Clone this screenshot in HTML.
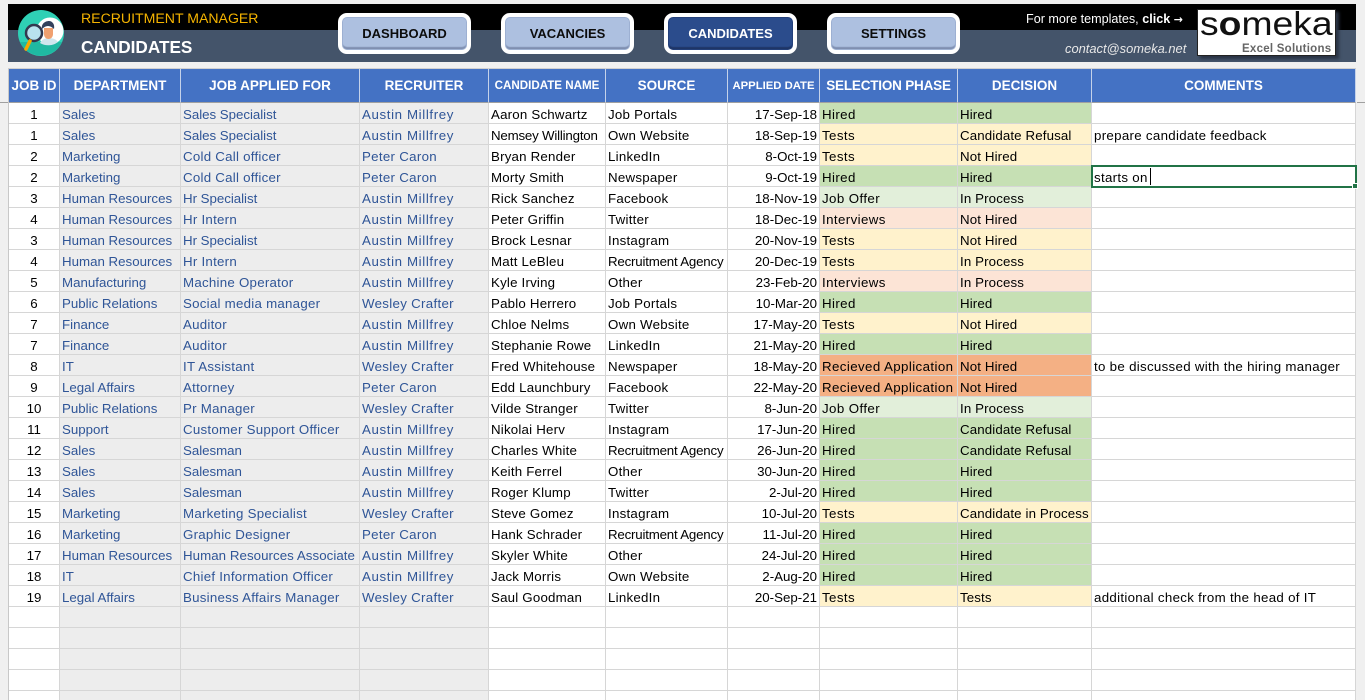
<!DOCTYPE html>
<html><head><meta charset="utf-8"><title>Candidates</title>
<style>
html,body{margin:0;padding:0;width:1365px;height:700px;overflow:hidden;background:#f0f0f0;font-family:"Liberation Sans",sans-serif}
#bar{position:absolute;left:8px;top:4px;width:1348px;height:58px;background:linear-gradient(#000 0,#000 26px,#44546a 26px)}
.t{position:absolute;white-space:nowrap}
.btn{position:absolute;top:13px;width:125px;height:33px;border:4px solid #fff;border-radius:9px;background:#adc0e0;box-shadow:inset 0 0 0 1px #9db0d2,inset 0 -3px 1px #7f8fb0;text-align:center;line-height:33px;font-size:13px;font-weight:bold;color:#0c0c0c}
.btn.on{background:#2b4c8c;color:#fff;box-shadow:inset 0 0 0 1px #24407a,inset 0 -3px 1px #1e3566}
#wrap{position:absolute;left:8px;top:68px;width:1348px;height:632px;background:#fff;overflow:hidden;border-left:1px solid #c8c8c8;border-top:1px solid #d0d0d0;box-sizing:border-box}
table{border-collapse:separate;border-spacing:0;table-layout:fixed;width:1347px}
td,th{border-right:1px solid #d6d6d6;border-bottom:1px solid #d6d6d6;padding:3px 2px 0;font-size:13.3px;font-weight:normal;white-space:nowrap;overflow:hidden;color:#000;height:17px;line-height:17px;box-sizing:content-box}
th{background:#4472c4;color:#fff;font-weight:bold;font-size:13.5px;height:32px;line-height:32px;text-align:center;border-right:1px solid #c5d2ea;border-bottom:1px solid #a0a0a0;padding:1px 0 0}
th.s{font-size:11.6px}
td:nth-child(1){text-align:center}
td:nth-child(2),td:nth-child(3),td:nth-child(4){background:#ededed;color:#2f5597}
td:nth-child(3){letter-spacing:.25px}
td:nth-child(4){letter-spacing:.3px}
td:nth-child(5){letter-spacing:.2px}
td:nth-child(6){letter-spacing:.25px}
td:nth-child(7){text-align:right}
td:nth-child(8){letter-spacing:.4px}
td:nth-child(9){letter-spacing:.12px}
td:nth-child(10){letter-spacing:.3px}
u{text-decoration:none;letter-spacing:.62px}
em{font-style:normal;letter-spacing:-.2px}
s{text-decoration:none;letter-spacing:-.03px}
.g{background:#c6e0b4}.y{background:#fff2cc}.p{background:#fce4d6}.l{background:#e2efda}.o{background:#f4b084}
#sel{position:absolute;left:1091px;top:165px;width:262px;height:19px;border:2px solid #217346;box-sizing:content-box}
#sel:after{content:"";position:absolute;right:-3px;bottom:-3px;width:4px;height:4px;background:#217346;border:1px solid #fff}
#caret{position:absolute;left:1150px;top:168px;width:1px;height:17px;background:#000}
#rl{position:absolute;left:0;top:102px;width:8px;height:1px;background:#a0a0a0}
#rr{position:absolute;left:1357px;top:102px;width:8px;height:1px;background:#a0a0a0}
</style></head><body>
<div id="bar"></div>
<svg class="t" style="left:17px;top:9px" width="50" height="48" viewBox="0 0 50 48">
<circle cx="24" cy="24" r="23" fill="#2fd0b5"/>
<path d="M3 33h42a23 23 0 0 1-42 0z" fill="#1fb9a2"/>
<circle cx="33" cy="22" r="13.500" fill="#fff"/>
<path d="M23 34c2-4 6-5 9-5s7 1 9 4a16 16 0 0 1-18 1z" fill="#cfe6ee"/>
<path d="M27 19h9v6c0 3-2 5-4.500 5s-4.500-2-4.500-5z" fill="#f0a070"/>
<path d="M25 20c-1-6 4-8 7-8s6 3 5 8c-2-2-4-3-6-3s-4 1-6 3z" fill="#33415c"/>
<circle cx="17" cy="24" r="8" fill="#b9e2ee" stroke="#33384f" stroke-width="2.500"/>
<path d="M13 32l-4 8" stroke="#f5a800" stroke-width="3.500" stroke-linecap="round"/>
</svg>
<div class="t" style="left:81px;top:9px;font-size:14.1px;color:#f5b400;line-height:18px">RECRUITMENT MANAGER</div>
<div class="t" style="left:81px;top:37px;font-size:17.2px;font-weight:bold;color:#fff;line-height:20px">CANDIDATES</div>
<div class="btn" style="left:338px">DASHBOARD</div>
<div class="btn" style="left:501px">VACANCIES</div>
<div class="btn on" style="left:664px">CANDIDATES</div>
<div class="btn" style="left:827px">SETTINGS</div>
<div class="t" style="left:1026px;top:12px;font-size:12.6px;color:#fff;line-height:15px">For more templates, <b>click <span style="font-family:'DejaVu Sans',sans-serif;font-size:11px">&#8594;</span></b></div>
<div class="t" style="left:1065px;top:41px;font-size:12.9px;font-style:italic;color:#e8e8e8;line-height:15px">contact@someka.net</div>
<div class="t" style="left:1197px;top:9px;width:139px;height:47px;background:#fff;box-shadow:3px 3px 3px #2a3445;border:1px solid #222;box-sizing:border-box;overflow:hidden">
<div class="t" style="left:2px;top:-3px;font-size:33px;color:#111;line-height:34px;transform-origin:0 0;transform:scaleX(1.13)">s<span style="font-weight:bold">o</span>meka</div>
<div class="t" style="left:44px;top:33px;font-size:11.5px;font-weight:bold;color:#666;line-height:13px;letter-spacing:.25px">Excel Solutions</div>
</div>
<div id="rl"></div><div id="rr"></div>
<div id="wrap"><table>
<colgroup><col style="width:51px"><col style="width:121px"><col style="width:179px"><col style="width:129px"><col style="width:117px"><col style="width:122px"><col style="width:92px"><col style="width:138px"><col style="width:134px"><col style="width:264px"></colgroup>
<tr><th>JOB ID</th><th>DEPARTMENT</th><th>JOB APPLIED FOR</th><th>RECRUITER</th><th class="s">CANDIDATE NAME</th><th>SOURCE</th><th class="s" style="font-size:11.3px">APPLIED DATE</th><th style="letter-spacing:-.2px">SELECTION PHASE</th><th>DECISION</th><th>COMMENTS</th></tr>
<tr><td>1</td><td>Sales</td><td><s>Sales Specialist</s></td><td><u>Austin Millfrey</u></td><td>Aaron Schwartz</td><td>Job Portals</td><td>17-Sep-18</td><td class="g">Hired</td><td class="g">Hired</td><td></td></tr>
<tr><td>1</td><td>Sales</td><td><s>Sales Specialist</s></td><td><u>Austin Millfrey</u></td><td><em>Nemsey Willington</em></td><td>Own Website</td><td>18-Sep-19</td><td class="y">Tests</td><td class="y">Candidate Refusal</td><td>prepare candidate feedback</td></tr>
<tr><td>2</td><td>Marketing</td><td>Cold Call officer</td><td>Peter Caron</td><td>Bryan Render</td><td>LinkedIn</td><td>8-Oct-19</td><td class="y">Tests</td><td class="y">Not Hired</td><td></td></tr>
<tr><td>2</td><td>Marketing</td><td>Cold Call officer</td><td>Peter Caron</td><td>Morty Smith</td><td>Newspaper</td><td>9-Oct-19</td><td class="g">Hired</td><td class="g">Hired</td><td>starts on</td></tr>
<tr><td>3</td><td>Human Resources</td><td><s>Hr Specialist</s></td><td><u>Austin Millfrey</u></td><td>Rick Sanchez</td><td>Facebook</td><td>18-Nov-19</td><td class="l">Job Offer</td><td class="l">In Process</td><td></td></tr>
<tr><td>4</td><td>Human Resources</td><td>Hr Intern</td><td><u>Austin Millfrey</u></td><td>Peter Griffin</td><td>Twitter</td><td>18-Dec-19</td><td class="p">Interviews</td><td class="p">Not Hired</td><td></td></tr>
<tr><td>3</td><td>Human Resources</td><td><s>Hr Specialist</s></td><td><u>Austin Millfrey</u></td><td>Brock Lesnar</td><td>Instagram</td><td>20-Nov-19</td><td class="y">Tests</td><td class="y">Not Hired</td><td></td></tr>
<tr><td>4</td><td>Human Resources</td><td>Hr Intern</td><td><u>Austin Millfrey</u></td><td>Matt LeBleu</td><td><em>Recruitment Agency</em></td><td>20-Dec-19</td><td class="y">Tests</td><td class="y">In Process</td><td></td></tr>
<tr><td>5</td><td>Manufacturing</td><td>Machine Operator</td><td><u>Austin Millfrey</u></td><td>Kyle Irving</td><td>Other</td><td>23-Feb-20</td><td class="p">Interviews</td><td class="p">In Process</td><td></td></tr>
<tr><td>6</td><td>Public Relations</td><td>Social media manager</td><td>Wesley Crafter</td><td>Pablo Herrero</td><td>Job Portals</td><td>10-Mar-20</td><td class="g">Hired</td><td class="g">Hired</td><td></td></tr>
<tr><td>7</td><td>Finance</td><td>Auditor</td><td><u>Austin Millfrey</u></td><td>Chloe Nelms</td><td>Own Website</td><td>17-May-20</td><td class="y">Tests</td><td class="y">Not Hired</td><td></td></tr>
<tr><td>7</td><td>Finance</td><td>Auditor</td><td><u>Austin Millfrey</u></td><td>Stephanie Rowe</td><td>LinkedIn</td><td>21-May-20</td><td class="g">Hired</td><td class="g">Hired</td><td></td></tr>
<tr><td>8</td><td>IT</td><td>IT Assistant</td><td>Wesley Crafter</td><td>Fred Whitehouse</td><td>Newspaper</td><td>18-May-20</td><td class="o">Recieved Application</td><td class="o">Not Hired</td><td>to be discussed with the hiring manager</td></tr>
<tr><td>9</td><td>Legal Affairs</td><td>Attorney</td><td>Peter Caron</td><td>Edd Launchbury</td><td>Facebook</td><td>22-May-20</td><td class="o">Recieved Application</td><td class="o">Not Hired</td><td></td></tr>
<tr><td>10</td><td>Public Relations</td><td>Pr Manager</td><td>Wesley Crafter</td><td>Vilde Stranger</td><td>Twitter</td><td>8-Jun-20</td><td class="l">Job Offer</td><td class="l">In Process</td><td></td></tr>
<tr><td>11</td><td>Support</td><td>Customer Support Officer</td><td><u>Austin Millfrey</u></td><td>Nikolai Herv</td><td>Instagram</td><td>17-Jun-20</td><td class="g">Hired</td><td class="g">Candidate Refusal</td><td></td></tr>
<tr><td>12</td><td>Sales</td><td><s>Salesman</s></td><td><u>Austin Millfrey</u></td><td>Charles White</td><td><em>Recruitment Agency</em></td><td>26-Jun-20</td><td class="g">Hired</td><td class="g">Candidate Refusal</td><td></td></tr>
<tr><td>13</td><td>Sales</td><td><s>Salesman</s></td><td><u>Austin Millfrey</u></td><td>Keith Ferrel</td><td>Other</td><td>30-Jun-20</td><td class="g">Hired</td><td class="g">Hired</td><td></td></tr>
<tr><td>14</td><td>Sales</td><td><s>Salesman</s></td><td><u>Austin Millfrey</u></td><td>Roger Klump</td><td>Twitter</td><td>2-Jul-20</td><td class="g">Hired</td><td class="g">Hired</td><td></td></tr>
<tr><td>15</td><td>Marketing</td><td>Marketing Specialist</td><td>Wesley Crafter</td><td>Steve Gomez</td><td>Instagram</td><td>10-Jul-20</td><td class="y">Tests</td><td class="y">Candidate in Process</td><td></td></tr>
<tr><td>16</td><td>Marketing</td><td>Graphic Designer</td><td>Peter Caron</td><td>Hank Schrader</td><td><em>Recruitment Agency</em></td><td>11-Jul-20</td><td class="g">Hired</td><td class="g">Hired</td><td></td></tr>
<tr><td>17</td><td>Human Resources</td><td><em style="letter-spacing:.05px">Human Resources Associate</em></td><td><u>Austin Millfrey</u></td><td>Skyler White</td><td>Other</td><td>24-Jul-20</td><td class="g">Hired</td><td class="g">Hired</td><td></td></tr>
<tr><td>18</td><td>IT</td><td>Chief Information Officer</td><td><u>Austin Millfrey</u></td><td>Jack Morris</td><td>Own Website</td><td>2-Aug-20</td><td class="g">Hired</td><td class="g">Hired</td><td></td></tr>
<tr><td>19</td><td>Legal Affairs</td><td>Business Affairs Manager</td><td>Wesley Crafter</td><td>Saul Goodman</td><td>LinkedIn</td><td>20-Sep-21</td><td class="y">Tests</td><td class="y">Tests</td><td>additional check from the head of IT</td></tr>
<tr><td></td><td></td><td></td><td></td><td></td><td></td><td></td><td></td><td></td><td></td></tr>
<tr><td></td><td></td><td></td><td></td><td></td><td></td><td></td><td></td><td></td><td></td></tr>
<tr><td></td><td></td><td></td><td></td><td></td><td></td><td></td><td></td><td></td><td></td></tr>
<tr><td></td><td></td><td></td><td></td><td></td><td></td><td></td><td></td><td></td><td></td></tr>
<tr><td></td><td></td><td></td><td></td><td></td><td></td><td></td><td></td><td></td><td></td></tr>
</table></div>
<div id="sel"></div><div id="caret"></div>
</body></html>
